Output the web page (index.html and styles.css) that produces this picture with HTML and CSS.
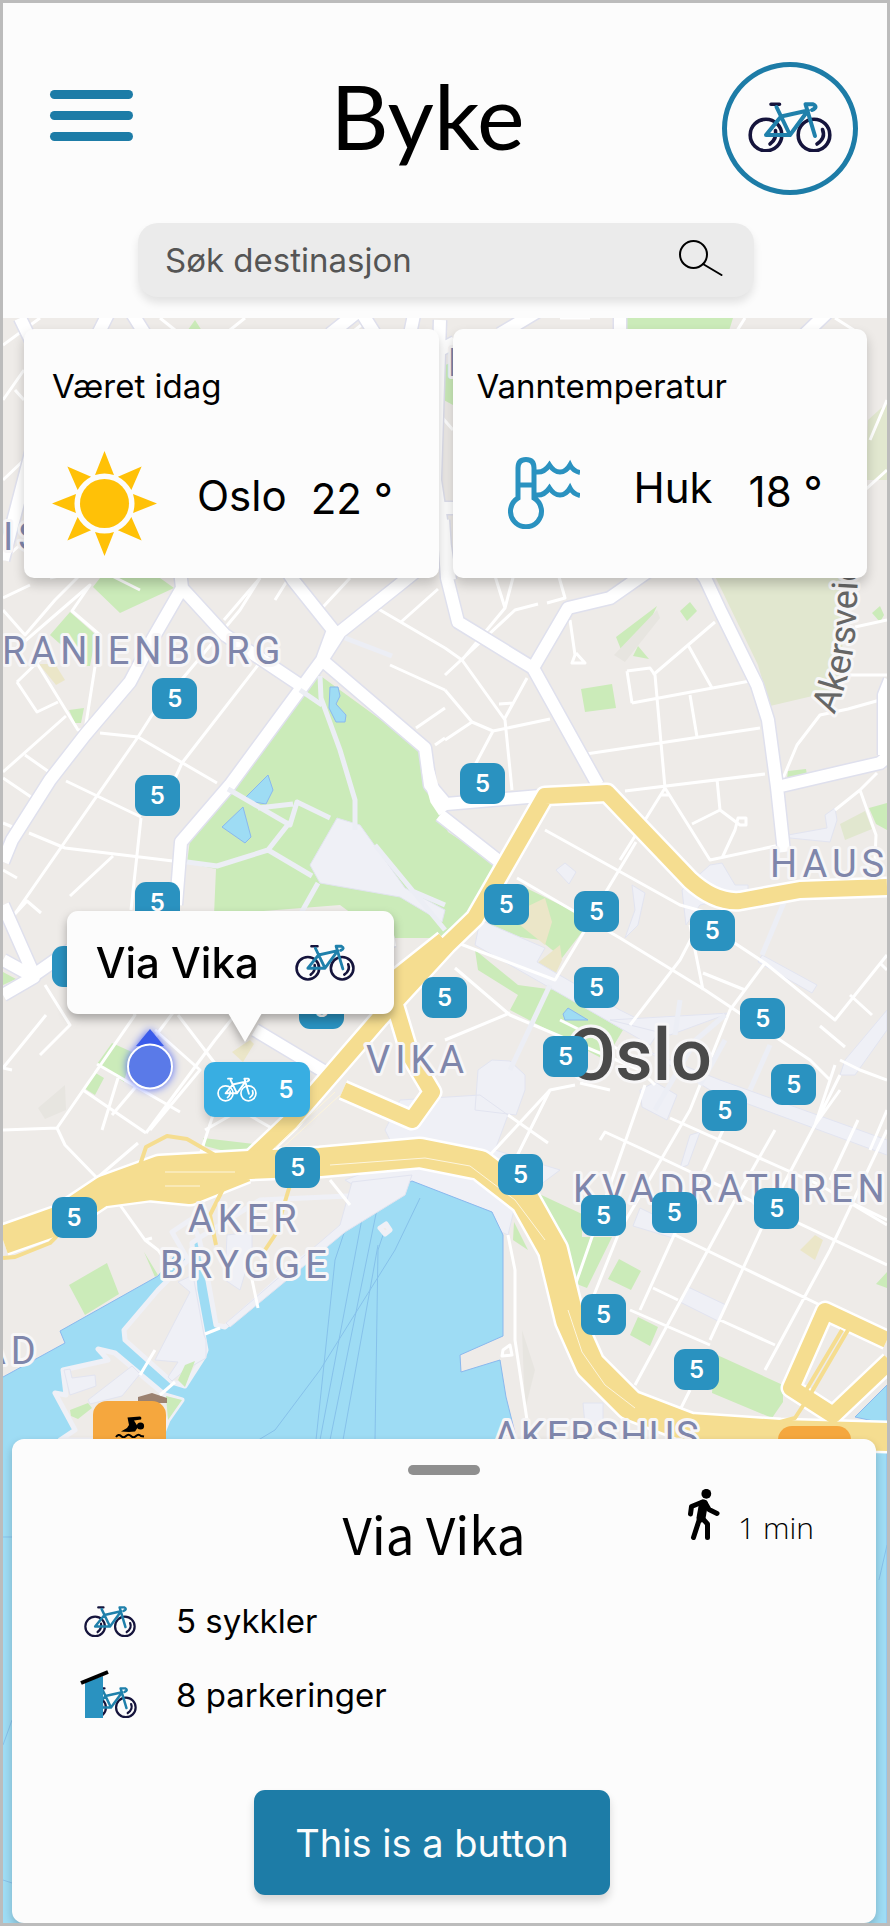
FILE: index.html
```html
<!DOCTYPE html>
<html lang="no">
<head>
<meta charset="utf-8">
<meta name="viewport" content="width=device-width, initial-scale=1">
<title>Byke</title>
<link rel="stylesheet" href="styles.css">
</head>
<body>
<svg class="defs" aria-hidden="true">
  <symbol id="bike" viewBox="0 0 84 50">
    <g fill="none" stroke-linecap="round" stroke-linejoin="round">
      <g class="bike-wheel">
        <circle cx="18" cy="33" r="15.8"/><circle cx="66" cy="33" r="15.8"/>
        <path d="M23 2.2H31.500M27.500 28.500Q29 37 22 42M74.500 27.500Q78 36 69 42"/>
      </g>
      <path class="bike-frame" d="M28.500 5L42 33H18L33 14.500L60 8.500L42 33M67 34L57.500 2.200H65Q70.500 5 64 8"/>
    </g>
  </symbol>
</svg>
<div class="app">
  <header class="header">
    <div class="topbar">
      <button class="menu" aria-label="Meny"><span></span><span></span><span></span></button>
      <h1 class="brand">Byke</h1>
      <button class="profile" aria-label="Mine sykler"><svg class="bike"><use href="#bike"/></svg></button>
    </div>
    <form class="search" role="search">
      <input type="search" aria-label="Søk destinasjon" placeholder="Søk destinasjon">
      <button class="search-go" type="button" aria-label="Søk">
        <svg viewBox="0 0 44 36"><circle cx="14.500" cy="14.500" r="13.500"/><path d="M24 24L42.500 35"/></svg>
      </button>
    </form>
  </header>

  <main class="map">
    <svg class="map-art" viewBox="3 318 884 1605" preserveAspectRatio="xMidYMin slice" role="img" aria-label="Kart over Oslo">
      <rect class="land" x="0" y="300" width="890" height="1640"/>
      <!-- parks -->
      <g class="park">
        <path d="M318 674L425 752L430 790L448 832L500 866L466 922L440 938H385L340 905L214 915L216 869L187 863L190 840L230 785Z"/>
        <path d="M93 587L120 613L174 588L160 578H100ZM50 635L70 612L96 635L90 666H85ZM69 710L84 708L81 723H75ZM627 318H733L728 334H627ZM185 334L195 320L204 334Z"/>
        <path d="M616 637L657 606L640 642L624 657ZM633 656L638 646L649 659ZM680 611L690 602L697 611L687 621ZM581 689L612 684L616 708L585 712ZM788 771L806 769L807 775L787 779ZM869 808L887 803V830L876 824ZM872 613L880 606L884 615L880 622Z"/>
        <path d="M485 932L520 885L575 912L582 932L562 958L540 940ZM475 950L518 985L555 990L623 1030L605 1060L510 1010L518 995L478 970ZM427 372L453 362V405L440 398Z"/>
        <path d="M112 1043L132 1052L124 1082L97 1064ZM94 1072L104 1078L95 1095L84 1088ZM203 1138L254 1144L240 1155L205 1146ZM3 972L16 979L3 985Z"/>
        <path d="M535 1192L582 1214V1237L612 1237L587 1288L574 1283L560 1240ZM514 1222L528 1250L513 1240ZM619 1259L641 1271L631 1290L608 1279ZM638 1317L658 1327L650 1346L630 1335ZM715 1354L783 1385L783 1402L772 1418L712 1393ZM876 1284L887 1272V1288Z"/>
        <path d="M69 1285L107 1263L119 1294L85 1315ZM144 1252L158 1275L155 1277Z"/>
      </g>
      <path class="cemetery" d="M712 570H850L838 690L770 706L758 665ZM840 824L865 811L872 829L845 840ZM868 420L890 400V480H866Z"/>
      <path class="sand" d="M39 664H55L65 680L56 685ZM520 910L545 898L552 922L545 945L520 925ZM535 965L560 945L562 960L555 975ZM800 1250L815 1235L823 1240L815 1260ZM232 1052L250 1040L254 1044L243 1062Z"/>
      <path class="shade" d="M614 655L657 610L660 618L625 662ZM38 1108L65 1085L66 1110L45 1119ZM522 1330L535 1370L525 1410Z"/>
      <!-- squares and pedestrian areas -->
      <g class="plaza">
        <path d="M337 818L360 825L405 888L445 910L442 922L400 897L320 883L310 865ZM480 920L545 948L537 962L620 1010L660 1030L650 1045L475 945ZM478 1070L492 1060L510 1061L525 1075V1090L516 1115L475 1110ZM640 1090L655 1082L677 1095L667 1120L642 1107ZM385 1130L400 1100L480 1095L508 1115L495 1150L560 1170L540 1185L445 1160H400Z"/>
        <path d="M788 835L827 828L825 815L835 808L837 820L830 842L790 838ZM556 870L565 863L576 872L569 884ZM710 865L722 863L735 885H748V893L700 905L686 925L682 890ZM762 955L817 985L812 993L758 962ZM645 1050L720 1080L887 1140V1155L710 1090ZM345 1180L412 1155L445 1170L500 1190L514 1210L508 1235L488 1226L492 1212L412 1182L375 1198ZM640 1208L675 1225L673 1238L633 1226ZM688 1287L726 1305L718 1321L680 1302ZM632 885L645 893L638 925L625 938L635 910ZM680 1168L690 1135L700 1132L688 1165ZM840 1075L845 1060L887 1010V1030L855 1075ZM610 1020L730 1013L670 1035ZM583 1403H603V1425H585Z"/>
      </g>
      <!-- harbour -->
      <path class="water" d="M3 1377L65 1343L60 1331L158 1276L190 1237L330 1230L345 1228L370 1200L412 1181L492 1212L503 1235V1336L460 1355L461 1372L500 1360L506 1397L518 1445L887 1447V1930H0V1377ZM855 1417L887 1385V1424Z"/>
      <path class="water" d="M330 687L338 687L340 696L336 704L346 715L345 722L336 722L329 708ZM246 797L268 775L273 790L266 804L254 802ZM222 827L243 807L251 837L245 843ZM563 1014L568 1008L588 1020L565 1020Z"/>
      <g class="ferry">
        <path d="M364 1208L320 1440M378 1204L330 1440M420 1198L395 1250L320 1370L275 1430L255 1442M345 1230L335 1260L316 1440M384 1232L378 1250L375 1440M3 1537H12M3 1745L12 1720M879 1580L887 1545M378 1245L343 1440M3 1880L12 1883"/>
      </g>
      <g class="pier">
        <path d="M172 1232L190 1220L199 1238L192 1243L195 1290L206 1350L203 1358L185 1386L172 1382L125 1340L124 1330L158 1290L188 1260ZM199 1238L260 1200L370 1195L345 1228L300 1260L225 1327L216 1325L207 1275Z"/>
        <path d="M98 1349L115 1353L165 1395L182 1400L168 1420L160 1440H60L75 1430L55 1393L66 1395L63 1370L108 1360ZM380 1228L386 1224L390 1230L385 1234Z"/>
      </g>
      <path class="plaza" d="M155 1360L190 1292L178 1282L193 1275L204 1335L206 1340V1358L185 1370L172 1381L168 1377L178 1362ZM64 1370L70 1369L72 1378L95 1375L96 1386L70 1395ZM88 1400L132 1366L140 1374L122 1396L90 1404ZM227 1235L252 1232V1250L240 1290L225 1280ZM352 1182L412 1175L405 1195L345 1232L230 1327L226 1323L340 1225Z"/>
      <path class="park" d="M178 1380L185 1365L195 1361L185 1387ZM166 1396L182 1400L168 1420ZM70 1410L88 1403L92 1408L78 1419L71 1416Z"/>
      <path class="house" d="M138 1397L152 1393L167 1398V1403H138Z"/>

      <!-- side streets -->
      <g class="street">
        <path d="M3 598L30 585M3 610L25 635L55 600L95 560M3 660L90 585L72 611L100 635L85 730L78 730L35 660M55 600L85 570L50 578M17 682L37 712L58 702M17 682L45 655M3 772L66 716M25 755L52 774M3 778L34 799M100 733L138 737L217 783M138 737L152 715L240 610L260 578M138 737L14 915L27 901L41 913M141 818L131 910M66 781L141 817M182 763L258 665M29 833L65 848L173 861M113 856L70 896M3 823L15 828M3 870L17 878M182 763L165 800"/>
        <path d="M224 620L260 578M323 607L350 578M375 607L445 648M401 622L438 589M390 665L445 690M416 728L445 708M435 745L445 738M445 648L462 660L505 608L515 570M445 675L515 610L538 604M505 608L490 560M547 603L565 598L557 570M462 660L505 720L512 790M445 690L472 722L493 731L550 719M445 740L472 722M493 731L475 765M499 704L513 703L505 718L527 678M570 620L575 655L572 663H585L576 653M445 580L438 540"/>
        <path d="M586 754L760 728M597 738M627 671L650 668L655 675L665 788L620 860M665 788L710 860L780 845M653 675L715 622M688 645L712 688M632 703L750 681M627 671L632 703M690 695L697 737M625 791L765 774M660 795L670 795M717 779L720 810L692 824M720 810L740 825H746V818H738L735 830L722 858M781 783L797 745L820 715L848 709L880 700M855 627L887 620M850 675H887M835 810L860 790L877 773M860 790L876 835L875 860"/>
        <path d="M545 830L680 905L705 912L680 960L630 1025M636 842L607 890L585 930L555 980L450 940M517 878L620 938L705 990L810 1060L830 1080M690 925L703 990M730 940L765 963L730 1010L690 1110L620 1230L580 1330M765 963L835 1020L887 955M820 1026L845 1047M850 995L872 1015M880 963L887 970M703 973L745 990M455 968L510 1015L640 1070L655 1085M445 1040L510 1013M610 1090L580 1083M645 1085L570 1300M575 1085L550 1090L490 1155M550 1090L510 1170M600 1140L605 1132L640 1148L887 1265M508 1115L548 1143M670 1118L820 1185L887 1225M723 1130L690 1200L640 1310M775 1130L735 1200L635 1385M815 1125L770 1210L710 1340M887 1130L830 1250L765 1370M870 1150L887 1110M840 1075L815 1125M653 1288L678 1300M675 1235L820 1305M630 1310L710 1345M720 1320L775 1345M560 1280L570 1275M840 1060L860 1070L887 1080M846 1200L887 1220M835 1065L815 1125L840 1090M690 1390L675 1420M830 1180L858 1120"/>
        <path d="M508 1235L515 1270V1340L527 1420M503 1350L510 1345L512 1355L502 1356ZM3 1130L57 1128L135 1015L125 1000M57 1128L65 1145L97 1178M97 1064L180 1112M83 1090L146 1133M46 1015L3 1068L12 1070M40 1055L70 1025L45 985M118 1078L102 1130M150 1070L112 1115M146 1133L215 1040L235 1015M130 1070L175 1010M178 1015L220 1070M155 1030L200 1070L150 1130M213 1115L200 1155M205 1130L240 1110L275 1130M120 1205L145 1240L158 1250L172 1270M145 1240L152 1238M250 1270L258 1308M205 1334L220 1328M140 1375L155 1350M160 1395L175 1382M560 1020L640 1060M97 1178L138 1143M330 1180L350 1205"/>
        <path d="M3 345L40 318M3 400L24 370M15 390L24 400M3 480L24 460M160 318L180 334M225 334L245 318M350 334L380 310M440 415L453 430M3 560L20 545M870 440L887 400M60 550L140 590M560 318L590 318M735 334L745 318M835 318L860 334M865 490L887 470M300 560L275 600"/>
      </g>
      <!-- avenues: casing, then fill -->
      <path class="avenue-casing" d="M20 318L50 380L3 560M180 570L182 588L152 640L130 682L85 735L50 780L12 840L3 862M182 588L225 635L300 685M430 560L399 585L340 632L322 660L230 785L181 842L176 905M280 560L293 580L333 630L322 660L425 748L430 785L446 804L540 796M440 815L500 862M443 520L447 578L458 622L533 668L598 785M533 668L568 608L610 598L650 570M690 560L705 578L720 610L757 685L768 720L777 787L784 852M777 787L880 763L890 755M884 755V695L890 680M3 905L34 975L70 950M3 960L34 977L3 995M395 940L370 945M255 1030L330 1075M110 310L95 340M130 310L145 334M330 334L360 310L375 334M410 334L415 310M500 334L540 310M620 334V310M805 334L830 310M440 350L455 342M438 508H455M440 320L435 480L450 580"/>
      <path class="avenue" d="M20 318L50 380L3 560M180 570L182 588L152 640L130 682L85 735L50 780L12 840L3 862M182 588L225 635L300 685M430 560L399 585L340 632L322 660L230 785L181 842L176 905M280 560L293 580L333 630L322 660L425 748L430 785L446 804L540 796M440 815L500 862M443 520L447 578L458 622L533 668L598 785M533 668L568 608L610 598L650 570M690 560L705 578L720 610L757 685L768 720L777 787L784 852M777 787L880 763L890 755M884 755V695L890 680M3 905L34 975L70 950M3 960L34 977L3 995M395 940L370 945M255 1030L330 1075M110 310L95 340M130 310L145 334M330 334L360 310L375 334M410 334L415 310M500 334L540 310M620 334V310M805 334L830 310M440 350L455 342M438 508H455M440 320L435 480L450 580"/>
      <path class="avenue" d="M428 770L436 800L444 812"/>
      <path class="path" d="M320 676L321 698L340 750L355 800L355 830M300 690L322 705M228 789L290 825L297 802L330 818M258 808L293 804M290 822L268 850L312 876M268 850L217 866L187 862M318 883L300 915M375 845L445 930M445 905L410 890M345 638L392 656"/>
      <path class="path" d="M550 985L510 1070M675 1035L680 1000M690 1045L725 1015M655 1110L690 1050M785 900L762 955M725 1040L700 1085M770 1045L750 1090"/>

      <!-- main roads -->
      <g class="main-road-casing">
        <path d="M250 1160L290 1122L380 1018L447 945L475 918L545 796L607 793L690 880Q715 903 740 901L800 890L887 887M444 940L400 975L372 1000M343 1090L412 1120L432 1092L410 1055L395 1005"/>
        <path d="M887 1340L825 1311L791 1388L833 1415L890 1361"/>
      </g>
      <path class="motorway-casing" d="M3 1240L60 1220L105 1190L160 1170L250 1165L320 1162L420 1153L480 1165L525 1200L553 1250L570 1320L590 1365L630 1405L690 1428L780 1434L890 1437M105 1192L150 1186L190 1190L245 1168"/>
      <g class="main-road">
        <path d="M250 1160L290 1122L380 1018L447 945L475 918L545 796L607 793L690 880Q715 903 740 901L800 890L887 887M444 940L400 975L372 1000M343 1090L412 1120L432 1092L410 1055L395 1005"/>
        <path d="M887 1340L825 1311L791 1388L833 1415L890 1361"/>
      </g>
      <path class="motorway" d="M3 1240L60 1220L105 1190L160 1170L250 1165L320 1162L420 1153L480 1165L525 1200L553 1250L570 1320L590 1365L630 1405L690 1428L780 1434L890 1437M105 1192L150 1186L190 1190L245 1168"/>
      <path class="motorway-line" d="M165 1172H235M165 1186H200M330 1165L425 1158L470 1166L515 1200L545 1240M568 1310L582 1352L605 1385L635 1408M280 1150L340 1095M275 1148L335 1092"/>
      <path class="slip" d="M140 1165L146 1147L167 1136L187 1139L220 1158M3 1258L15 1257L50 1243L65 1228M225 1185L210 1215L216 1245M290 1185L275 1235L265 1250M848 1330L810 1395L795 1418L780 1422M842 1330L805 1392"/>

      <!-- place names -->
      <g class="district">
        <text x="2" y="664">RANIENBORG</text>
        <text x="770" y="877">HAUS</text>
        <text x="366" y="1073">VIKA</text>
        <text x="188" y="1232">AKER</text>
        <text x="160" y="1278">BRYGGE</text>
        <text x="573" y="1202">KVADRATUREN</text>
        <text class="tight" x="494" y="1449">AKERSHUS</text>
        <text x="-19" y="1364">AD</text>
        <text x="3" y="550">IS</text>
        <text x="448" y="376">H</text>
      </g>
      <text class="city" x="566" y="1080">Oslo</text>
      <path id="akersveien" fill="none" d="M834 715Q854 670 856 620T862 500"/>
      <text class="road-name"><textPath href="#akersveien">Akersveien</textPath></text>
    </svg>

    <div class="pins">
      <button class="pin" style="left:16.9%;top:360px">5</button>
      <button class="pin" style="left:14.9%;top:457px">5</button>
      <button class="pin" style="left:14.9%;top:564px">5</button>
      <button class="pin" style="left:5.5%;top:628px">5</button>
      <button class="pin" style="left:33.5%;top:670px">5</button>
      <button class="pin" style="left:51.7%;top:445px">5</button>
      <button class="pin" style="left:54.4%;top:566px">5</button>
      <button class="pin" style="left:64.6%;top:573px">5</button>
      <button class="pin" style="left:77.7%;top:592px">5</button>
      <button class="pin" style="left:47.4%;top:659px">5</button>
      <button class="pin" style="left:64.6%;top:649px">5</button>
      <button class="pin" style="left:83.4%;top:680px">5</button>
      <button class="pin" style="left:61.1%;top:718px">5</button>
      <button class="pin" style="left:86.9%;top:746px">5</button>
      <button class="pin" style="left:79.1%;top:772px">5</button>
      <button class="pin" style="left:30.8%;top:829px">5</button>
      <button class="pin" style="left:56%;top:836px">5</button>
      <button class="pin" style="left:65.4%;top:877px">5</button>
      <button class="pin" style="left:73.4%;top:874px">5</button>
      <button class="pin" style="left:85%;top:870px">5</button>
      <button class="pin" style="left:5.5%;top:879px">5</button>
      <button class="pin" style="left:65.4%;top:976px">5</button>
      <button class="pin" style="left:75.9%;top:1031px">5</button>
      <button class="pin swim" style="left:10.2%;top:1083px" aria-label="Badeplass">
        <svg viewBox="0 0 30 22"><path d="M12.500 1.500L25 0.500Q27 1 26 3.500L19 4.500L23 11L20 15.500L14 16L6 15.500L12 12L14 9Z"/><circle cx="25.500" cy="10" r="3.600"/><path class="wave" d="M1 21Q3.500 17.500 6 20T11 20T16 20T21 20T26 20L29 20.500"/></svg>
      </button>
      <button class="pin swim" style="left:87.7%;top:1108px" aria-label="Badeplass"></button>
      <button class="pin selected" style="left:22.7%;top:744px"><svg class="bike"><use href="#bike"/></svg>5</button>
      <svg class="me" style="left:13.3%;top:709px" viewBox="0 0 58 70" role="img" aria-label="Din posisjon">
        <path class="me-heading" d="M29 2L43 19H15Z"/><circle cx="29" cy="39.500" r="22"/>
      </svg>
      <div class="callout" style="left:7.2%;top:593px"><span>Via Vika</span><svg class="bike"><use href="#bike"/></svg></div>
    </div>

    <section class="cards">
      <article class="card">
        <h2>Været idag</h2>
        <div class="reading">
          <svg class="sun" viewBox="0 0 105 105"><circle cx="52.500" cy="52.500" r="24.500"/><path id="ray" d="M52.500 0L62 24Q52.500 21 43 24Z"/><use href="#ray" transform="rotate(90 52.500 52.500)"/><use href="#ray" transform="rotate(180 52.500 52.500)"/><use href="#ray" transform="rotate(270 52.500 52.500)"/><use href="#ray" transform="rotate(45 52.500 52.500)"/><use href="#ray" transform="rotate(135 52.500 52.500)"/><use href="#ray" transform="rotate(225 52.500 52.500)"/><use href="#ray" transform="rotate(315 52.500 52.500)"/></svg>
          <span class="place">Oslo</span><span class="temp">22 °</span>
        </div>
      </article>
      <article class="card water-card">
        <h2>Vanntemperatur</h2>
        <div class="reading">
          <svg class="thermo" viewBox="0 0 72 72"><path d="M10 41V11Q10 2.500 18 2.500T26 11V41A15.500 15.500 0 1 1 10 41ZM10 28H26M28 15Q36 16 41.500 8Q46 15 52 15T62 8Q65 14 72 15.500M28 38Q36 39 41.500 31Q46 38 52 38T62 31Q65 37 72 38.500"/></svg>
          <span class="place">Huk</span><span class="temp">18 °</span>
        </div>
      </article>
    </section>

    <section class="sheet">
      <button class="handle" aria-label="Dra panelet"></button>
      <div class="sheet-head">
        <h2>Via Vika</h2>
        <p class="walk"><svg viewBox="0 0 32 51" aria-hidden="true"><circle cx="18.300" cy="4.800" r="4.900"/><path d="M14.500 13L3.500 17.500L2.500 25M17 13.500L21 20.500L29 24.500M11.500 30L5.500 48.500M14.500 29.500L19.500 35V48.500"/><path class="torso" d="M15.500 15L13 29"/></svg>1 min</p>
      </div>
      <ul class="facts">
        <li><svg class="bike"><use href="#bike"/></svg>5 sykkler</li>
        <li><svg class="shed" viewBox="0 0 58 50" aria-hidden="true"><svg x="5" y="17" width="52" height="31"><use href="#bike"/></svg><path class="shed-wall" d="M5 12L23 6V48H5Z"/><path class="shed-roof" d="M1 13L28 2"/></svg>8 parkeringer</li>
      </ul>
      <button class="cta">This is a button</button>
    </section>
  </main>
</div>
</body>
</html>
```
FILE: styles.css
```css
* { box-sizing: border-box; }
body { margin: 0; background: #fcfcfc; color: #000; font-family: Inter, "Liberation Sans", sans-serif; }
button { border: 0; padding: 0; background: none; font: inherit; color: inherit; cursor: pointer; }
h1, h2, p, ul { margin: 0; padding: 0; font-weight: 400; }
.defs { position: absolute; width: 0; height: 0; }

.app { min-height: 100vh; display: flex; flex-direction: column; border: 3px solid #bcbcbc; --wheel: #15143c; --frame: #1f80ab; }
.bike { width: 52px; height: 31px; flex: none; }
.bike-wheel { stroke: var(--wheel); stroke-width: 3.6px; }
.bike-frame { stroke: var(--frame); stroke-width: 4px; }

/* header */
.header { padding: 59px 29px 21px 47px; }
.topbar { display: flex; justify-content: space-between; align-items: center; }
.menu { width: 83px; display: grid; gap: 12px; margin-bottom: 26px; }
.menu span { height: 9px; border-radius: 5px; background: #1d7ca7; }
.brand { font: 400 90px/100px Lato, sans-serif; margin-bottom: 28px; }
.profile { width: 136px; height: 133px; display: grid; place-items: center; border: 5px solid #1d7ca7; border-radius: 50%; padding-bottom: 4px; }
.profile .bike { width: 84px; height: 50px; }
.search { display: flex; align-items: center; margin: 28px 104px 0 88px; height: 74px; padding: 0 31px 0 27px; border-radius: 20px; background: #ebebeb; box-shadow: 0 6px 8px rgba(0, 0, 0, .1); }
.search input { flex: 1; min-width: 0; border: 0; padding: 0; outline: 0; background: none; font: 400 33px/40px Inter, sans-serif; color: #000; }
.search input::placeholder { color: #555; opacity: 1; }
.search-go { width: 44px; height: 44px; }
.search-go svg { width: 44px; height: 36px; fill: none; stroke: #000; stroke-width: 2px; stroke-linecap: round; }

/* map */
.map { position: relative; flex: 1; display: flex; flex-direction: column; overflow: hidden; }
.map-art { position: absolute; inset: 0; width: 100%; height: 100%; }
.map-art path { stroke-linejoin: round; }
.land { fill: #eeebe8; }
.park { fill: #cbebb9; }
.cemetery { fill: #e1e7cf; }
.sand { fill: #ebe6c8; }
.shade { fill: #e7e5e0; }
.plaza { fill: #eff0f6; stroke: #e2e4f0; stroke-width: 1px; }
.water { fill: #9edcf4; stroke: #8ab8ee; stroke-width: 1px; }
.ferry { fill: none; stroke: #86c1ea; stroke-width: 1px; }
.pier { fill: #eeebe8; stroke: #eff0f6; stroke-width: 5px; }
.house { fill: #9c8270; }
.street { fill: none; stroke: #fff; stroke-width: 3px; }
.avenue-casing { fill: none; stroke: #dfe0ed; stroke-width: 15px; }
.avenue { fill: none; stroke: #fff; stroke-width: 12px; }
.path { fill: none; stroke: #eceef5; stroke-width: 5px; }
.main-road-casing { fill: none; stroke: #fff; stroke-width: 21px; }
.main-road { fill: none; stroke: #f5dd90; stroke-width: 16px; }
.motorway-casing { fill: none; stroke: #fff; stroke-width: 33px; }
.motorway { fill: none; stroke: #f5dd90; stroke-width: 28px; }
.motorway-line { fill: none; stroke: #fdf5dc; stroke-width: 1px; }
.slip { fill: none; stroke: #f5dd90; stroke-width: 4px; }
.district, .city, .road-name { paint-order: stroke; stroke: #f7f6f7; stroke-width: 6px; stroke-linejoin: round; }
.district { font: 400 38px Roboto, sans-serif; letter-spacing: 5px; fill: #7f86ab; }
.district .tight { letter-spacing: 2px; }
.city { font: 500 72px Roboto, sans-serif; fill: #4a4a4a; }
.road-name { font: 400 36px Roboto, sans-serif; fill: #666; }

.pins { position: absolute; inset: 0; }
.pin { position: absolute; width: 45px; height: 41px; border-radius: 11px; background: #2a92c0; color: #fff; font: 600 24px/41px Inter, sans-serif; text-align: center; }
.pin.swim { display: flex; justify-content: center; align-items: flex-start; width: 73px; height: 73px; padding-top: 15px; border-radius: 14px; background: #f5a73e; }
.swim svg { width: 30px; height: 22px; }
.wave { fill: none; stroke: #000; stroke-width: 2px; }
.pin.selected { display: flex; align-items: center; justify-content: space-between; width: 106px; height: 55px; padding: 0 16px 0 13px; background: #38aee2; box-shadow: 0 6px 10px rgba(0, 0, 0, .15); --wheel: #fff; --frame: #fff; }
.selected .bike { width: 40px; height: 25px; }
.me { position: absolute; width: 58px; height: 70px; fill: #5a7ae8; stroke: #fff; stroke-width: 2px; filter: drop-shadow(0 0 4px #4a62f5); }
.me-heading { fill: #3a5bea; stroke: none; }
.callout { position: absolute; display: flex; align-items: center; gap: 36px; height: 103px; padding: 0 39px 0 29px; border-radius: 11px; background: #fcfcfc; font: 500 42px/52px Inter, sans-serif; filter: drop-shadow(0 5px 5px rgba(0, 0, 0, .3)); }
.callout::after { content: ""; position: absolute; left: 161px; top: 102px; border: 17px solid transparent; border-top: 29px solid #fcfcfc; border-bottom: 0; }
.callout .bike { width: 60px; height: 37px; }

/* weather cards */
.cards { position: relative; display: grid; grid-template-columns: 1fr 1fr; gap: 14px; padding: 11px 20px 0 21px; }
.card { height: 249px; padding: 37px 28px 0; border-radius: 10px; background: #fcfcfc; box-shadow: 0 6px 12px rgba(0, 0, 0, .2); white-space: nowrap; }
.card h2 { font-size: 33px; line-height: 40px; }
.reading { display: flex; align-items: center; height: 105px; margin-top: 45px; font-size: 42px; line-height: 52px; }
.sun { width: 105px; height: 105px; fill: #ffc107; margin-right: 40px; }
.place { padding-bottom: 16px; }
.temp { padding-bottom: 10px; margin-left: 24px; }
.water-card { padding-left: 24px; }
.water-card .reading { height: 90px; padding-left: 31px; }
.thermo { width: 72px; height: 72px; margin: 0 54px 6px 0; fill: none; stroke: #2a92c0; stroke-width: 5px; }
.water-card .temp { margin-left: 36px; padding-bottom: 8px; }

/* bottom sheet */
.sheet { position: relative; display: flex; flex-direction: column; margin: auto 11px 0 9px; padding: 26px 42px 28px; border-radius: 12px; background: #fcfcfc; box-shadow: 0 4px 8px rgba(0, 0, 0, .2); }
.handle { align-self: center; width: 72px; height: 10px; border-radius: 5px; background: #8f8f8f; }
.sheet-head { display: grid; grid-template-columns: 1fr auto 1fr; padding: 14px 20px 0 0; }
.sheet-head h2 { grid-column: 2; font: 400 51px/80px "Noto Sans CJK JP", sans-serif; padding-top: 4px; }
.walk { display: flex; align-items: flex-end; justify-content: flex-end; gap: 18px; align-self: start; font: 300 30px/24px "Open Sans", sans-serif; }
.walk svg { width: 32px; height: 51px; }
.walk path { fill: none; stroke: #000; stroke-width: 5px; stroke-linecap: round; stroke-linejoin: round; }
.walk .torso { stroke-width: 9px; }
.facts { list-style: none; padding-left: 26px; margin-top: 23px; font-size: 33px; line-height: 44px; }
.facts li { display: grid; grid-template-columns: 96px 1fr; align-items: center; height: 50px; margin-bottom: 24px; }
.facts .bike { margin-left: 4px; }
.shed { width: 58px; height: 50px; }
.shed-wall { fill: #2a92c0; }
.shed-roof { stroke: #000; stroke-width: 4px; }
.cta { align-self: center; min-width: 356px; height: 105px; margin-top: 46px; margin-right: 24px; border-radius: 11px; background: #1d7ca7; color: #fcfcfc; font-size: 38px; line-height: 46px; box-shadow: 0 6px 8px rgba(0, 0, 0, .15); }
```
